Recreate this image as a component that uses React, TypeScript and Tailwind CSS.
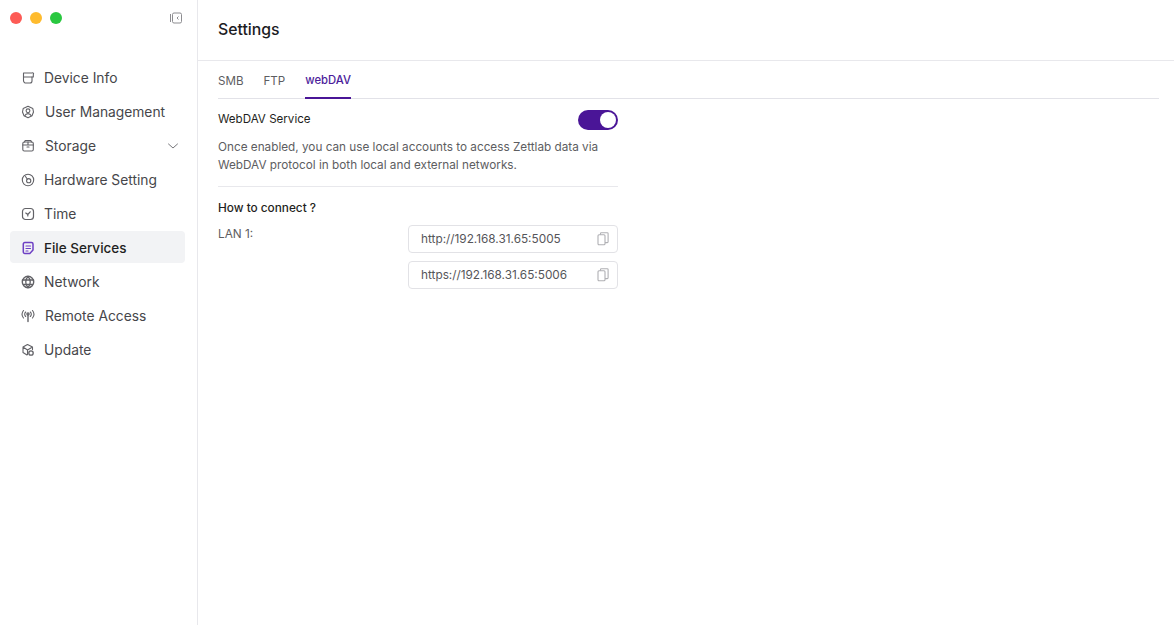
const font = "font-['Inter','Liberation_Sans',sans-serif]";

function Svg({ children, className = "text-[#626267]" }: { children: React.ReactNode; className?: string }) {
  return (
    <svg width="14" height="14" viewBox="0 0 14 14" fill="none" stroke="currentColor" strokeWidth="1.100" strokeLinecap="round" strokeLinejoin="round" className={className}>
      {children}
    </svg>
  );
}

const items: { label: string; gap: string; active?: boolean; chevron?: boolean; icon: React.ReactNode }[] = [
  { label: "Device Info", gap: "gap-[9px]", icon: <Svg><path d="M2.500 2h8.500a1 1 0 0 1 1.300 1.500V6H2.500Z" /><path d="M2.500 6v3.500a2.500 2.500 0 0 0 2.500 2.500h4a2 2 0 0 0 2-2V6" /></Svg> },
  { label: "User Management", gap: "gap-[10px]", icon: <Svg><path d="M7 1.300 11.800 3.500 12.500 7 11 10.800 7 12.700 3 10.800 1.500 7 2.200 3.500Z" /><circle cx="7" cy="5.800" r="1.900" /><path d="M3.800 10.800c.6-1.500 1.800-2.200 3.200-2.200s2.600.7 3.200 2.200" /></Svg> },
  { label: "Storage", gap: "gap-[10px]", chevron: true, icon: <Svg><rect x="1.800" y="3" width="10.500" height="9" rx="1.500" /><path d="M1.800 6h10.500M3.500 3l.7-1.500h5.600L10.500 3M7 3v3M6 8h2" /></Svg> },
  { label: "Hardware Setting", gap: "gap-[9px]", icon: <Svg><circle cx="7" cy="7" r="5.700" /><circle cx="7.700" cy="7.700" r="2.100" /><path d="M4.500 3.500 6.200 6" /></Svg> },
  { label: "Time", gap: "gap-[9px]", icon: <Svg><rect x="1.500" y="1.500" width="11" height="11" rx="3" strokeWidth="1.200" /><path d="M4.800 6 6.800 7.500 9.200 4.800M6.800 7.500v1.500" strokeWidth="1.200" /></Svg> },
  { label: "File Services", gap: "gap-[9px]", active: true, icon: <Svg className="text-[#6d3fc4]"><path d="M3.800 1.500h6.700A1.500 1.500 0 0 1 12 3v6l-3.200 3.500H3.800A1.500 1.500 0 0 1 2.300 11V3A1.500 1.500 0 0 1 3.800 1.500Z" strokeWidth="1.500" /><path d="M5 5h4.500M5 7.500h4.500M5 10h2" strokeWidth="1.200" /></Svg> },
  { label: "Network", gap: "gap-[9px]", icon: <Svg><circle cx="7" cy="7" r="5.700" strokeWidth="1.400" /><path d="M1.500 5h11M2.500 9.500h9M7 1.500c-3 3-3 8 0 11M7 1.500c3 3 3 8 0 11" strokeWidth="1.300" /></Svg> },
  { label: "Remote Access", gap: "gap-[10px]", icon: <Svg><circle cx="7" cy="5" r="1.100" strokeWidth="1.300" /><path d="M7 6v6.500" strokeWidth="1.400" /><path d="M4.700 3a3 3 0 0 0 0 4.500M9.300 3a3 3 0 0 1 0 4.500M2.500 1.500a6 6 0 0 0 0 7.500M11.500 1.500a6 6 0 0 1 0 7.500" /></Svg> },
  { label: "Update", gap: "gap-[9px]", icon: <Svg><path d="M6.500 1.500 11.500 4v2.500M6.500 1.500 2 4v5.500L6 12M2 4l4.500 3 5-3M6.500 7v4.500" /><circle cx="10" cy="10" r="2.200" strokeWidth="1.300" /></Svg> },
];

function Copy() {
  return (
    <svg width="12" height="14" viewBox="0 0 12 14" fill="none" stroke="#b0b0b4" strokeWidth="1.100" className="shrink-0">
      <rect x="1" y="2.800" width="7" height="10" rx="1" />
      <path d="M3.500 2.800V1.500a.8.8 0 0 1 .8-.8h6a.8.8 0 0 1 .8.8v8.300a.8.8 0 0 1-.8.8H8" />
    </svg>
  );
}

function UrlBox({ url }: { url: string }) {
  return (
    <div className="w-[210px] h-[28px] border border-[#e2e2e6] rounded-[4px] flex items-center justify-between pl-[12px] pr-[8px] text-[11.800px] text-[#555559]">
      <span className="pt-[1px]">{url}</span>
      <Copy />
    </div>
  );
}

export default function App() {
  return (
    <div className={`${font} w-[1174px] h-[625px] flex bg-white overflow-hidden`}>
      <aside className="w-[198px] h-full border-r border-[#e8e8ec] shrink-0 flex flex-col">
        <div className="h-[36px] flex items-center justify-between pl-[10px] pr-[15px]">
          <div className="flex gap-[8px]">
            <span className="w-[12px] h-[12px] rounded-full bg-[#fd5b55]" />
            <span className="w-[12px] h-[12px] rounded-full bg-[#febb2e]" />
            <span className="w-[12px] h-[12px] rounded-full bg-[#2ac840]" />
          </div>
          <svg width="12" height="12" viewBox="0 0 12 12" fill="none" stroke="#8d8d91" strokeWidth="1">
            <rect x="2.500" y="1" width="9" height="10" rx="1.500" />
            <path d="M.5 2v8M8.500 4.500 7 6l1.500 1.500" />
          </svg>
        </div>
        <nav className="mt-[25px] ml-[10px] w-[175px] flex flex-col gap-[2px]">
          {items.map((it) => (
            <div
              key={it.label}
              className={`h-[32px] flex items-center pl-[11px] pr-[6px] pt-[2px] rounded-[4px] ${it.gap} ${it.active ? "bg-[#f2f3f5] text-[#1f1f22] font-medium text-[13.500px]" : "text-[#46464a] text-[13.800px]"}`}
            >
              {it.icon}
              <span className="flex-1">{it.label}</span>
              {it.chevron && (
                <svg width="12" height="12" viewBox="0 0 12 12" fill="none" stroke="#77777b" strokeWidth="1" strokeLinecap="round" strokeLinejoin="round">
                  <path d="M1.500 4 6 8l4.500-4" />
                </svg>
              )}
            </div>
          ))}
        </nav>
      </aside>
      <main className="flex-1 flex flex-col">
        <header className="h-[61px] border-b border-[#e8e8ec] flex items-center pl-[20px] text-[15.800px] font-medium text-[#1c1c1f]">Settings</header>
        <div className="pl-[20px] pr-[15px]">
          <div className="h-[38px] flex gap-[20px] border-b border-[#e2e2e8] text-[11.600px]">
            <div className="h-[38px] flex items-center pt-[3px] text-[#5d5d61]">SMB</div>
            <div className="h-[38px] flex items-center pt-[3px] text-[#5d5d61]">FTP</div>
            <div className="h-[38px] w-[46px] whitespace-nowrap flex items-center pt-[3px] font-medium text-[11.300px] text-[#4c1d9b] border-b-2 border-[#4a1597]">webDAV</div>
          </div>
          <div className="w-[400px]">
            <div className="mt-[11px] h-[20px] flex items-center justify-between">
              <span className="text-[11.600px] text-[#1f1f22]">WebDAV Service</span>
              <span className="w-[40px] h-[20px] rounded-full bg-[#4a1597] flex items-center justify-end pr-[2px]">
                <span className="w-[16px] h-[16px] rounded-full bg-white" />
              </span>
            </div>
            <p className="mt-[8px] text-[11.750px] leading-[18px] text-[#5d5d61] pb-[12px] border-b border-[#e8e8ec]">
              Once enabled, you can use local accounts to access Zettlab data via WebDAV protocol in both local and external networks.
            </p>
            <div className="mt-[13px] text-[11.800px] font-medium text-[#1f1f22] leading-[16px]">How to connect ?</div>
            <div className="mt-[9px] flex justify-between">
              <span className="text-[11.800px] text-[#5d5d61] leading-[18px]">LAN 1:</span>
              <div className="flex flex-col gap-[8px]">
                <UrlBox url="http://192.168.31.65:5005" />
                <UrlBox url="https://192.168.31.65:5006" />
              </div>
            </div>
          </div>
        </div>
      </main>
    </div>
  );
}
